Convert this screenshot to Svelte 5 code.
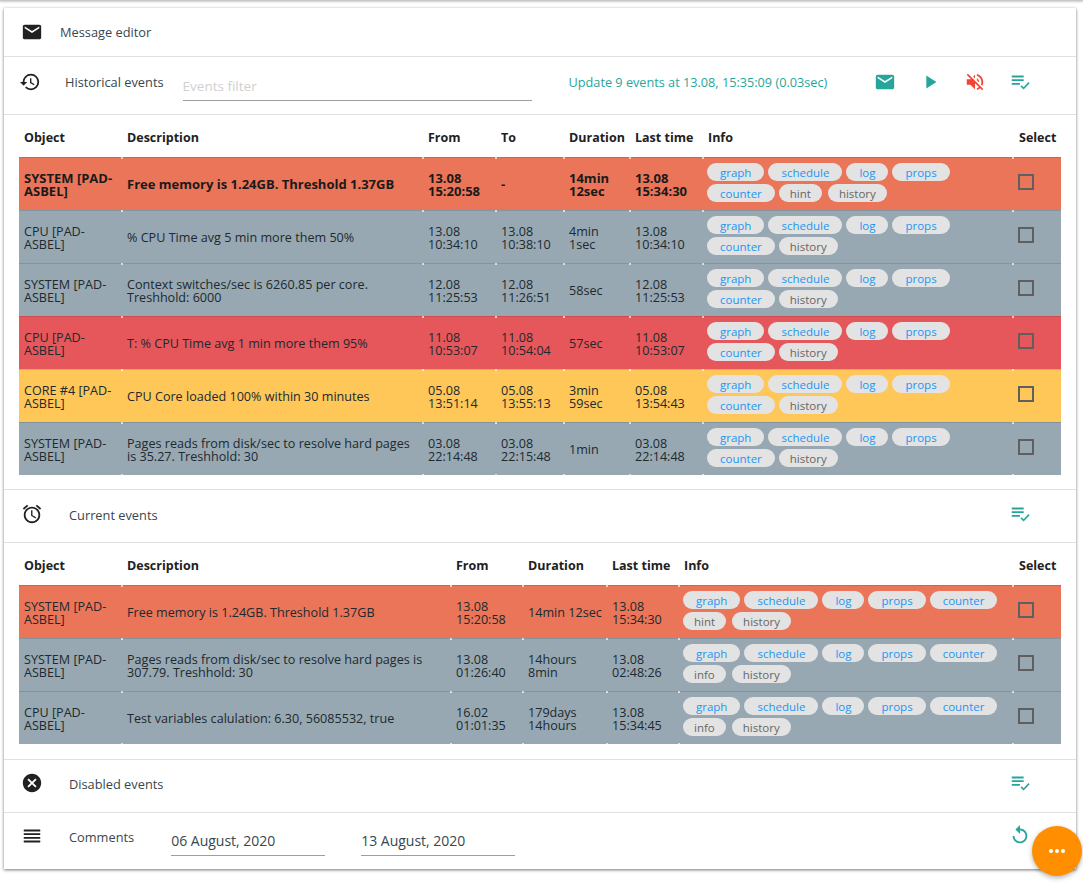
<script lang="ts">
  type Row = {
    object: string;
    desc: string;
    from: string;
    to?: string;
    duration: string;
    last: string;
    tone: string;
    strong?: boolean;
    note: string;
  };

  const historical: Row[] = [
    { object: "SYSTEM [PAD-ASBEL]", desc: "Free memory is 1.24GB. Threshold 1.37GB", from: "13.08 15:20:58", to: "-", duration: "14min 12sec", last: "13.08 15:34:30", tone: "high", strong: true, note: "hint" },
    { object: "CPU [PAD-ASBEL]", desc: "% CPU Time avg 5 min more them 50%", from: "13.08 10:34:10", to: "13.08 10:38:10", duration: "4min 1sec", last: "13.08 10:34:10", tone: "info", note: "" },
    { object: "SYSTEM [PAD-ASBEL]", desc: "Context switches/sec is 6260.85 per core. Treshhold: 6000", from: "12.08 11:25:53", to: "12.08 11:26:51", duration: "58sec", last: "12.08 11:25:53", tone: "info", note: "" },
    { object: "CPU [PAD-ASBEL]", desc: "T: % CPU Time avg 1 min more them 95%", from: "11.08 10:53:07", to: "11.08 10:54:04", duration: "57sec", last: "11.08 10:53:07", tone: "disaster", note: "" },
    { object: "CORE #4 [PAD-ASBEL]", desc: "CPU Core loaded 100% within 30 minutes", from: "05.08 13:51:14", to: "05.08 13:55:13", duration: "3min 59sec", last: "05.08 13:54:43", tone: "warn", note: "" },
    { object: "SYSTEM [PAD-ASBEL]", desc: "Pages reads from disk/sec to resolve hard pages is 35.27. Treshhold: 30", from: "03.08 22:14:48", to: "03.08 22:15:48", duration: "1min", last: "03.08 22:14:48", tone: "info", note: "" }
  ];

  const current: Row[] = [
    { object: "SYSTEM [PAD-ASBEL]", desc: "Free memory is 1.24GB. Threshold 1.37GB", from: "13.08 15:20:58", duration: "14min 12sec", last: "13.08 15:34:30", tone: "high", note: "hint" },
    { object: "SYSTEM [PAD-ASBEL]", desc: "Pages reads from disk/sec to resolve hard pages is 307.79. Treshhold: 30", from: "13.08 01:26:40", duration: "14hours 8min", last: "13.08 02:48:26", tone: "info", note: "info" },
    { object: "CPU [PAD-ASBEL]", desc: "Test variables calulation: 6.30, 56085532, true", from: "16.02 01:01:35", duration: "179days 14hours", last: "13.08 15:34:45", tone: "info", note: "info" }
  ];

  const links = ["graph", "schedule", "log", "props", "counter"];
</script>

{#snippet chips(note: string)}
  <div class="chips">
    {#each links as l}<span class="chip link">{l}</span>{/each}
    {#if note}<span class="chip plainchip note">{note}</span>{/if}
    <span class="chip plainchip">history</span>
  </div>
{/snippet}

{#snippet checkicon()}
  <svg class="icon teal" viewBox="0 0 24 24"><path d="M3 5h13v2H3zM3 9h13v2H3zM3 13h9v2H3zM22.5 13.4l-6.6 6.9-3.4-3.4 1.3-1.3 2.1 2.1 5.3-5.6z" /></svg>
{/snippet}

<div class="page">
  <div class="topshade"></div>
  <div class="card">
    <section class="bar first">
      <svg class="icon" viewBox="0 0 24 24"><path d="M20 4H4c-1.1 0-2 .9-2 2v12c0 1.1.9 2 2 2h16c1.1 0 2-.9 2-2V6c0-1.100-.9-2-2-2zm0 4l-8 5-8-5V6l8 5 8-5v2z" /></svg>
      <span class="title msg">Message editor</span>
    </section>

    <section class="bar hist">
      <svg class="icon" viewBox="0 0 24 24"><path d="M13 3a9 9 0 0 0-9 9H1l3.890 3.890.07.140L9 12H6c0-3.870 3.130-7 7-7s7 3.130 7 7-3.130 7-7 7c-1.930 0-3.680-.79-4.940-2.060l-1.420 1.420A8.954 8.954 0 0 0 13 21a9 9 0 0 0 0-18zm-1 5v5l4.280 2.540.72-1.210-3.500-2.080V8H12z" /></svg>
      <span class="title h-title">Historical events</span>
      <div class="field filter"><span class="placeholder">Events filter</span></div>
      <span class="status">Update 9 events at 13.08, 15:35:09 (0.03sec)</span>
      <div class="actions">
        <svg class="icon teal" viewBox="0 0 24 24"><path d="M20 4H4c-1.1 0-2 .9-2 2v12c0 1.1.9 2 2 2h16c1.1 0 2-.9 2-2V6c0-1.100-.9-2-2-2zm0 4l-8 5-8-5V6l8 5 8-5v2z" /></svg>
        <svg class="icon teal" viewBox="0 0 24 24"><path d="M8 5v14l11-7z" /></svg>
        <svg class="icon red" viewBox="0 0 24 24"><path d="M16.500 12c0-1.770-1.020-3.290-2.500-4.030v2.210l2.450 2.450c.03-.2.050-.41.050-.63zm2.500 0c0 .94-.2 1.820-.54 2.640l1.510 1.510A8.796 8.796 0 0 0 21 12c0-4.280-2.990-7.860-7-8.770v2.060c2.890.86 5 3.540 5 6.710zM4.270 3L3 4.270 7.730 9H3v6h4l5 5v-6.730l4.250 4.250c-.67.52-1.420.93-2.250 1.180v2.060a8.990 8.990 0 0 0 3.690-1.810L19.730 21 21 19.730l-9-9L4.270 3zM12 4L9.910 6.090 12 8.180V4z" /></svg>
        {@render checkicon()}
      </div>
    </section>

    <div class="wrap hist-table">
      <table>
        <colgroup>
          <col style="width:103px" /><col style="width:301px" /><col style="width:73px" /><col style="width:68px" /><col style="width:66px" /><col style="width:73px" /><col style="width:310px" /><col />
        </colgroup>
        <thead>
          <tr><th>Object</th><th>Description</th><th>From</th><th>To</th><th>Duration</th><th>Last time</th><th>Info</th><th>Select</th></tr>
        </thead>
        <tbody>
          {#each historical as r}
            <tr class={r.tone} class:strong={r.strong}>
              <td>{r.object}</td>
              <td>{r.desc}</td>
              <td>{r.from}</td>
              <td>{r.to}</td>
              <td>{r.duration}</td>
              <td>{r.last}</td>
              <td class="tags">{@render chips(r.note)}</td>
              <td class="sel"><span class="box"></span></td>
            </tr>
          {/each}
        </tbody>
      </table>
    </div>

    <section class="bar plain cur-bar">
      <svg class="icon" viewBox="0 0 24 24"><path d="M22 5.720l-4.600-3.860-1.290 1.530 4.600 3.860L22 5.720zM7.880 3.390L6.600 1.860 2 5.710l1.290 1.530 4.590-3.850zM12.500 8H11v6l4.750 2.850.75-1.230-4-2.370V8zM12 4c-4.970 0-9 4.030-9 9s4.030 9 9 9 9-4.030 9-9-4.030-9-9-9zm0 16c-3.870 0-7-3.130-7-7s3.130-7 7-7 7 3.130 7 7-3.130 7-7 7z" /></svg>
      <span class="title cur">Current events</span>
      <div class="actions end">{@render checkicon()}</div>
    </section>

    <div class="wrap cur-table">
      <table>
        <colgroup>
          <col style="width:103px" /><col style="width:329px" /><col style="width:72px" /><col style="width:84px" /><col style="width:72px" /><col style="width:334px" /><col />
        </colgroup>
        <thead>
          <tr><th>Object</th><th>Description</th><th>From</th><th>Duration</th><th>Last time</th><th>Info</th><th>Select</th></tr>
        </thead>
        <tbody>
          {#each current as r}
            <tr class={r.tone}>
              <td>{r.object}</td>
              <td>{r.desc}</td>
              <td>{r.from}</td>
              <td>{r.duration}</td>
              <td>{r.last}</td>
              <td class="tags">{@render chips(r.note)}</td>
              <td class="sel"><span class="box"></span></td>
            </tr>
          {/each}
        </tbody>
      </table>
    </div>

    <section class="bar plain dis-bar">
      <svg class="icon" viewBox="0 0 24 24"><path d="M12 2C6.470 2 2 6.470 2 12s4.470 10 10 10 10-4.470 10-10S17.530 2 12 2zm5 13.590L15.590 17 12 13.410 8.410 17 7 15.590 10.590 12 7 8.410 8.410 7 12 10.590 15.590 7 17 8.410 13.410 12 17 15.590z" /></svg>
      <span class="title cur">Disabled events</span>
      <div class="actions end">{@render checkicon()}</div>
    </section>

    <section class="bar comments">
      <svg class="icon" viewBox="0 0 24 24"><path d="M3 15h18v-2H3v2zm0 4h18v-2H3v2zm0-8h18V9H3v2zm0-6v2h18V5H3z" /></svg>
      <span class="title com-title">Comments</span>
      <div class="field date first-date"><span>06 August, 2020</span></div>
      <div class="field date"><span>13 August, 2020</span></div>
      <div class="actions end">
        <svg class="icon teal" viewBox="0 0 24 24"><path d="M12 5V1L7 6l5 5V7c3.310 0 6 2.690 6 6s-2.690 6-6 6-6-2.690-6-6H4c0 4.420 3.580 8 8 8s8-3.580 8-8-3.580-8-8-8z" /></svg>
      </div>
    </section>
  </div>

  <button class="fab" aria-label="more">
    <svg viewBox="0 0 24 24" width="24" height="24"><path fill="#fff" d="M6 10a2 2 0 1 0 0 4 2 2 0 0 0 0-4zm12 0a2 2 0 1 0 0 4 2 2 0 0 0 0-4zm-6 0a2 2 0 1 0 0 4 2 2 0 0 0 0-4z" /></svg>
  </button>
</div>

<style>
  :global(body) {
    margin: 0;
    background: #fff;
    font-family: "Open Sans", "Noto Sans", sans-serif;
    font-size: 13px;
    color: #212529;
  }
  .page {
    position: relative;
    height: 885px;
  }
  .topshade {
    height: 1px;
    background: #c8c8c8;
    box-shadow: 0 1px 2px rgba(0, 0, 0, 0.3);
  }
  .card {
    margin: 7px 7px 0 4px;
    background: #fff;
    box-shadow: 0 1px 3px rgba(0, 0, 0, 0.55);
    height: 861px;
  }
  .bar {
    display: flex;
    align-items: center;
    height: 52px;
    border-bottom: 1px solid #e0e0e0;
    padding-left: 17px;
    padding-right: 45px;
  }
  .first {
    height: 48px;
  }
  .hist {
    height: 57px;
  }
  .hist > .icon {
    margin: -8px 0 0 -2px;
  }
  .hist .actions {
    margin-top: -8px;
  }
  .cur-bar > .icon,
  .cur-bar .actions {
    margin-top: -4px;
  }
  .dis-bar > .icon,
  .dis-bar .actions {
    margin-top: -6px;
  }
  .comments {
    border-bottom: 0;
    height: 56px;
  }
  .comments > .icon {
    margin-top: -10px;
  }
  .comments .actions {
    margin-top: -12px;
  }
  .icon {
    width: 22px;
    height: 22px;
    fill: #212121;
    flex: none;
  }
  .teal {
    fill: #26a69a;
  }
  .red {
    fill: #f44336;
  }
  .title {
    font-size: 12.8px;
    color: #37474f;
  }
  .msg {
    margin-left: 17px;
  }
  .h-title {
    margin-left: 24px;
    margin-top: -7px;
  }
  .cur {
    margin-left: 26px;
  }
  .cur-bar .cur {
    margin-top: -2px;
  }
  .dis-bar .cur {
    margin-top: -4px;
  }
  .com-title {
    margin-left: 26px;
    margin-top: -8px;
  }
  .field {
    display: flex;
    align-items: center;
    height: 30px;
    border-bottom: 1px solid #9e9e9e;
    box-sizing: border-box;
    font-size: 14px;
  }
  .filter {
    width: 349px;
    margin: 1px 0 0 19px;
    font-size: 13.5px;
  }
  .placeholder {
    color: #d0d0d0;
  }
  .status {
    margin: -7px 0 0 37px;
    font-size: 12.7px;
    color: #26a69a;
    white-space: nowrap;
  }
  .actions {
    margin-left: auto;
    display: flex;
    align-items: center;
    gap: 23px;
  }
  .date {
    width: 154px;
    margin-left: 36px;
    color: #37474f;
  }
  .first-date {
    margin-left: 37px;
  }
  .wrap {
    padding: 0 15px 14px;
    border-bottom: 1px solid #e0e0e0;
  }
  .cur-table {
    padding-bottom: 15px;
  }
  table {
    width: 1042px;
    table-layout: fixed;
    border-collapse: separate;
    border-spacing: 0;
  }
  th {
    height: 42px;
    text-align: left;
    font-weight: 700;
    font-size: 12.5px;
    padding: 3px 0 0 5px;
    box-sizing: border-box;
    color: #212121;
    white-space: nowrap;
  }
  th:last-child {
    padding-left: 6px;
  }
  td {
    height: 53px;
    padding: 1px 5px 0;
    box-sizing: border-box;
    line-height: 13px;
    font-size: 12.6px;
    color: #20292e;
    border-top: 1px solid rgba(0, 0, 0, 0.12);
    position: relative;
  }
  /* small light ticks where cell edges meet the row line */
  td:not(:first-child)::before {
    content: "";
    position: absolute;
    left: -1px;
    top: -1px;
    width: 2px;
    height: 2px;
    background: rgba(255, 255, 255, 0.65);
  }
  tbody tr:last-child td:not(:first-child)::after {
    content: "";
    position: absolute;
    left: -1px;
    bottom: -1px;
    width: 2px;
    height: 2px;
    background: rgba(255, 255, 255, 0.65);
  }
  .strong td {
    font-size: 13px;
    font-weight: 700;
    color: #1a1a1a;
  }
  .high td {
    background: #eb7558;
  }
  .info td {
    background: #97a8b2;
  }
  .disaster td {
    background: #e5575b;
  }
  .warn td {
    background: #ffc658;
  }
  td.tags {
    padding: 5px 4px 0;
    vertical-align: top;
  }
  .chips {
    display: flex;
    flex-wrap: wrap;
    gap: 3px 4px;
  }
  .chip {
    height: 18px;
    line-height: 20px;
    padding: 0 13px;
    border-radius: 9px;
    background: #e3e3e3;
    color: #666;
    font-size: 11.5px;
    font-weight: 400;
  }
  .plainchip {
    padding: 0 11px;
  }
  .note {
    margin-right: 2px;
  }
  .link {
    color: #2196f3;
  }
  td.sel {
    padding: 0 0 0 5px;
  }
  .box {
    display: block;
    width: 16px;
    height: 16px;
    margin-top: -4px;
    box-sizing: border-box;
    border: 2px solid #5f5f5f;
  }
  .fab {
    position: absolute;
    left: 1032px;
    top: 826px;
    width: 50px;
    height: 50px;
    border-radius: 50%;
    border: 0;
    padding: 0;
    display: flex;
    align-items: center;
    justify-content: center;
    background: #ff8f00;
    box-shadow: 0 2px 5px rgba(0, 0, 0, 0.3);
  }
</style>
